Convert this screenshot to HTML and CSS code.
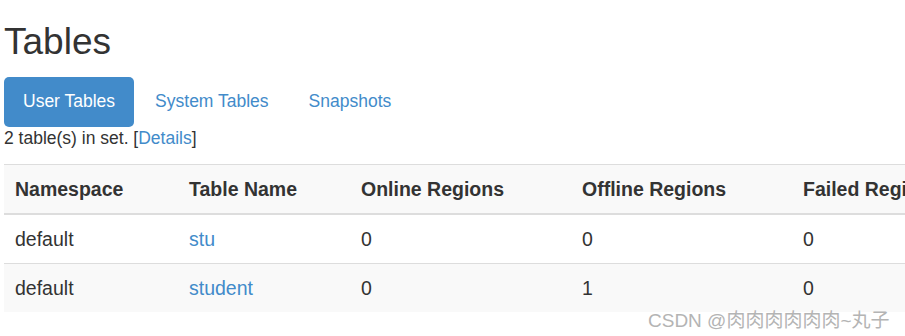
FILE: index.html
```html
<!DOCTYPE html>
<html lang="en">

<head>
  <meta charset="UTF-8">
  <meta name="viewport" content="width=device-width, initial-scale=1.0">
  <title>Tables</title>
  <link rel="stylesheet" href="styles.css">
</head>

<body>
  <div id="container">
    <h1 class="title">Tables</h1>
    <ul class="tabs">
      <li class="active"><a href="#">User Tables</a></li>
      <li><a href="#">System Tables</a></li>
      <li><a href="#">Snapshots</a></li>
    </ul>
    <p class="info">2 table(s) in set. [<a href="#">Details</a>]</p>
    <div class="table-wrap">
      <table class="tbl">
        <colgroup>
          <col class="c1">
          <col class="c2">
          <col class="c3">
          <col class="c4">
          <col class="c5">
        </colgroup>
        <thead>
          <tr>
            <th>Namespace</th>
            <th>Table Name</th>
            <th>Online Regions</th>
            <th>Offline Regions</th>
            <th>Failed Regions</th>
          </tr>
        </thead>
        <tbody>
          <tr>
            <td>default</td>
            <td><a href="#">stu</a></td>
            <td>0</td>
            <td>0</td>
            <td>0</td>
          </tr>
          <tr class="odd">
            <td>default</td>
            <td><a href="#">student</a></td>
            <td>0</td>
            <td>1</td>
            <td>0</td>
          </tr>
        </tbody>
      </table>
    </div>
  </div>
  <div class="mark">CSDN @肉肉肉肉肉肉~丸子</div>
</body>

</html>
```

FILE: styles.css
```css
* {
  margin: 0;
  padding: 0;
  box-sizing: border-box;
}

html,
body {
  overflow: hidden;
}

body {
  font-family: "Liberation Sans", Arial, "Noto Sans CJK SC", sans-serif;
  font-size: 17.5px;
  color: #333;
  background: #fff;
}

a {
  color: #428bca;
  text-decoration: none;
}

#container {
  padding-left: 4px;
}

.title {
  font-size: 37px;
  font-weight: 500;
  line-height: 40px;
  margin-top: 22px;
  margin-bottom: 15px;
}

.tabs {
  display: flex;
  list-style: none;
}

.tabs li + li {
  margin-left: 2px;
}

.tabs a {
  display: block;
  font-size: 17.5px;
  line-height: 22px;
  padding: 13px 19px 15px;
  border-radius: 5px;
}

.tabs .active a {
  background: #428bca;
  color: #fff;
}

.info {
  line-height: 22px;
}

.table-wrap {
  margin-top: 15px;
  width: 1200px;
}

.tbl {
  width: 1000px;
  border-collapse: collapse;
  font-size: 19.5px;
  table-layout: fixed;
}

.c1 { width: 174px; }
.c2 { width: 172px; }
.c3 { width: 221px; }
.c4 { width: 221px; }
.c5 { width: 212px; }

.tbl th,
.tbl td {
  text-align: left;
  padding: 10px 11px;
  line-height: 28px;
  white-space: nowrap;
}

.tbl thead tr {
  background: #f9f9f9;
  border-top: 1px solid #ddd;
  border-bottom: 2px solid #ddd;
}

.tbl th {
  font-weight: bold;
}

.tbl tbody tr + tr {
  border-top: 1px solid #ddd;
}

.tbl tbody td {
  height: 48px;
}

.tbl .odd {
  background: #f9f9f9;
}

.mark {
  position: absolute;
  left: 648px;
  top: 305px;
  font-size: 19px;
  color: #b4b4b4;
  text-shadow: 0 0 1px #fff, 1px 1px 0 #fff;
  white-space: nowrap;
}
```
